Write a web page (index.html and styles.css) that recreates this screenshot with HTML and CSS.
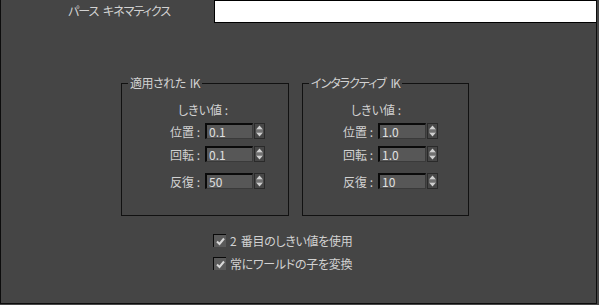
FILE: index.html
```html
<!DOCTYPE html>
<html lang="ja">

<head>
    <meta charset="UTF-8">
    <meta name="viewport" content="width=device-width, initial-scale=1.0">
    <title>パース キネマティクス</title>
    <link rel="stylesheet" href="styles.css">
</head>

<body>
    <div class="panel">
        <div class="tabbar">
            <div class="tab">パース キネマティクス</div>
            <div class="blank"></div>
        </div>

        <div class="content">
            <div class="groups">
                <fieldset class="group applied">
                    <legend>適用された IK</legend>
                    <div class="thresh">しきい値 :</div>
                    <div class="row">
                        <label>位置 :</label>
                        <div class="field"><input type="text" value="0.1"></div>
                        <div class="spin"><svg width="9" height="14" viewBox="0 0 9 14"><path d="M4.5 1.5 L8 5.5 L1 5.5 Z" fill="#d0d0d0"/><path d="M1 7 H8" stroke="#9a9a9a"/><path d="M1 8.5 L8 8.5 L4.5 12.5 Z" fill="#d0d0d0"/></svg></div>
                    </div>
                    <div class="row">
                        <label>回転 :</label>
                        <div class="field"><input type="text" value="0.1"></div>
                        <div class="spin"><svg width="9" height="14" viewBox="0 0 9 14"><path d="M4.5 1.5 L8 5.5 L1 5.5 Z" fill="#d0d0d0"/><path d="M1 7 H8" stroke="#9a9a9a"/><path d="M1 8.5 L8 8.5 L4.5 12.5 Z" fill="#d0d0d0"/></svg></div>
                    </div>
                    <div class="row iter">
                        <label>反復 :</label>
                        <div class="field"><input type="text" value="50"></div>
                        <div class="spin"><svg width="9" height="14" viewBox="0 0 9 14"><path d="M4.5 1.5 L8 5.5 L1 5.5 Z" fill="#d0d0d0"/><path d="M1 7 H8" stroke="#9a9a9a"/><path d="M1 8.5 L8 8.5 L4.5 12.5 Z" fill="#d0d0d0"/></svg></div>
                    </div>
                </fieldset>

                <fieldset class="group interactive">
                    <legend>インタラクティブ IK</legend>
                    <div class="thresh">しきい値 :</div>
                    <div class="row">
                        <label>位置 :</label>
                        <div class="field"><input type="text" value="1.0"></div>
                        <div class="spin"><svg width="9" height="14" viewBox="0 0 9 14"><path d="M4.5 1.5 L8 5.5 L1 5.5 Z" fill="#d0d0d0"/><path d="M1 7 H8" stroke="#9a9a9a"/><path d="M1 8.5 L8 8.5 L4.5 12.5 Z" fill="#d0d0d0"/></svg></div>
                    </div>
                    <div class="row">
                        <label>回転 :</label>
                        <div class="field"><input type="text" value="1.0"></div>
                        <div class="spin"><svg width="9" height="14" viewBox="0 0 9 14"><path d="M4.5 1.5 L8 5.5 L1 5.5 Z" fill="#d0d0d0"/><path d="M1 7 H8" stroke="#9a9a9a"/><path d="M1 8.5 L8 8.5 L4.5 12.5 Z" fill="#d0d0d0"/></svg></div>
                    </div>
                    <div class="row iter">
                        <label>反復 :</label>
                        <div class="field"><input type="text" value="10"></div>
                        <div class="spin"><svg width="9" height="14" viewBox="0 0 9 14"><path d="M4.5 1.5 L8 5.5 L1 5.5 Z" fill="#d0d0d0"/><path d="M1 7 H8" stroke="#9a9a9a"/><path d="M1 8.5 L8 8.5 L4.5 12.5 Z" fill="#d0d0d0"/></svg></div>
                    </div>
                </fieldset>
            </div>

            <div class="checks">
                <label class="check">
                    <span class="box"><svg width="11" height="11" viewBox="0 0 11 11"><path d="M2 5.5 L4.5 8 L9 2.5" fill="none" stroke="#d8d8d8" stroke-width="2"/></svg></span>
                    2 番目のしきい値を使用
                </label>
                <label class="check">
                    <span class="box"><svg width="11" height="11" viewBox="0 0 11 11"><path d="M2 5.5 L4.5 8 L9 2.5" fill="none" stroke="#d8d8d8" stroke-width="2"/></svg></span>
                    常にワールドの子を変換
                </label>
            </div>
        </div>
    </div>
</body>

</html>
```

FILE: styles.css
```css
* {
    margin: 0;
    padding: 0;
    box-sizing: border-box;
}

body {
    width: 599px;
    height: 305px;
    background: #454545;
    font-family: "Noto Sans CJK JP", "DejaVu Sans", sans-serif;
    font-size: 12px;
    font-feature-settings: "palt";
    color: #d2d2d2;
    overflow: hidden;
}

.panel {
    width: 597px;
    height: 304px;
    border: 1px solid #0c0c0c;
    border-top: none;
    display: flex;
    flex-direction: column;
}

.tabbar {
    display: flex;
    height: 23px;
}

.tab {
    width: 213px;
    padding-left: 67px;
    line-height: 22px;
    letter-spacing: -1px;
    word-spacing: 3px;
    white-space: nowrap;
}

.blank {
    flex: 1;
    background: #ffffff;
    border: 1px solid #000000;
    border-right: none;
}

.content {
    padding: 53px 0 0 120px;
}

.groups {
    display: flex;
    gap: 13px;
}

.group {
    height: 140px;
    border: 1px solid #111111;
    padding: 13px 0 0 0;
    margin: 0;
    min-width: 0;
}

.group legend {
    margin-left: 6px;
    padding: 0 2px;
    line-height: 14px;
    letter-spacing: -0.5px;
    word-spacing: 2px;
}

.interactive legend {
    letter-spacing: -1px;
    word-spacing: 3px;
}

.applied {
    width: 168px;
    --lab: 79px;
}

.interactive {
    width: 167px;
    --lab: 71px;
}

.thresh {
    line-height: 14px;
    padding-left: calc(var(--lab) - 23px);
    margin-bottom: 6px;
}

.row {
    display: flex;
    align-items: center;
    height: 16px;
    margin-bottom: 7px;
}

.row.iter {
    margin-top: 11px;
}

.row label {
    width: var(--lab);
    text-align: right;
    padding-right: 1px;
    white-space: nowrap;
}

.field {
    margin-left: 4px;
    width: 48px;
    height: 16px;
}

.field input {
    width: 100%;
    height: 100%;
    background: #575757;
    border: none;
    border-top: 2px solid #0a0a0a;
    border-left: 2px solid #0a0a0a;
    border-bottom: 1px solid #3a3a3a;
    border-right: 1px solid #3a3a3a;
    color: #e0e0e0;
    font-family: "Noto Sans CJK JP", "DejaVu Sans", sans-serif;
    font-size: 12px;
    padding: 0 0 0 2px;
    outline: none;
}

.spin {
    margin-left: 1px;
    width: 11px;
    height: 16px;
    background: #474747;
    border: 1px solid #2a2a2a;
    display: flex;
    align-items: center;
    justify-content: center;
}

.checks {
    padding: 18px 0 0 92px;
    display: flex;
    flex-direction: column;
    gap: 10px;
}

.check {
    display: flex;
    align-items: center;
    gap: 4px;
    height: 13px;
    line-height: 13px;
    letter-spacing: -0.3px;
    word-spacing: 2px;
    white-space: nowrap;
}

.box {
    width: 13px;
    height: 13px;
    background: #5a5a5a;
    border-top: 1px solid #0a0a0a;
    border-left: 1px solid #0a0a0a;
    display: flex;
    align-items: center;
    justify-content: center;
}
```
